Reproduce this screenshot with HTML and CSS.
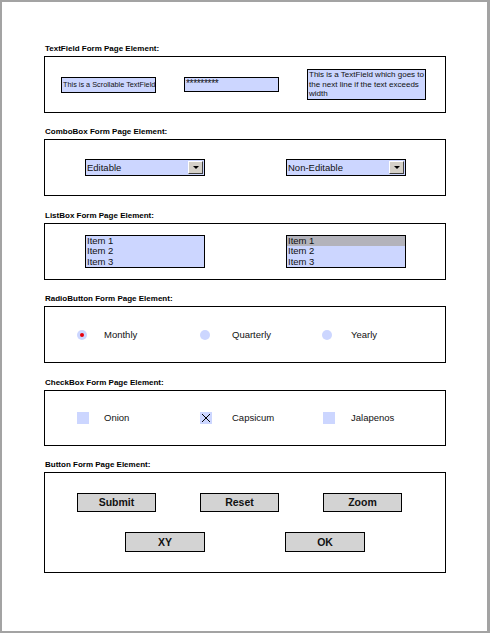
FILE: index.html
```html
<!DOCTYPE html>
<html>
<head>
<meta charset="utf-8">
<link rel="stylesheet" href="styles.css">
</head>
<body>
<div class="frame">
  <section class="section">
    <div class="title">TextField Form Page Element:</div>
    <div class="box box-text">
      <div class="field field-scroll">This is a Scrollable TextField</div>
      <div class="field field-pass">*********</div>
      <div class="field field-multi">This is a TextField which goes to the next line if the text exceeds width</div>
    </div>
  </section>

  <section class="section">
    <div class="title">ComboBox Form Page Element:</div>
    <div class="box box-pair">
      <div class="combo"><span class="combo-text">Editable</span><span class="combo-btn"><span class="tri"></span></span></div>
      <div class="combo"><span class="combo-text">Non-Editable</span><span class="combo-btn"><span class="tri"></span></span></div>
    </div>
  </section>

  <section class="section">
    <div class="title">ListBox Form Page Element:</div>
    <div class="box box-pair">
      <div class="list">
        <div class="item">Item 1</div>
        <div class="item">Item 2</div>
        <div class="item">Item 3</div>
      </div>
      <div class="list">
        <div class="item selected">Item 1</div>
        <div class="item">Item 2</div>
        <div class="item">Item 3</div>
      </div>
    </div>
  </section>

  <section class="section">
    <div class="title">RadioButton Form Page Element:</div>
    <div class="box box-opts">
      <span class="radio on"></span><span class="label">Monthly</span>
      <span class="radio"></span><span class="label">Quarterly</span>
      <span class="radio"></span><span class="label">Yearly</span>
    </div>
  </section>

  <section class="section">
    <div class="title">CheckBox Form Page Element:</div>
    <div class="box box-opts box-check">
      <span class="check"></span><span class="label">Onion</span>
      <span class="check"><svg viewBox="0 0 12 12" width="12" height="12"><path d="M2 2 L10 10 M10 2 L2 10" stroke="#000" stroke-width="1" fill="none"/></svg></span><span class="label">Capsicum</span>
      <span class="check"></span><span class="label">Jalapenos</span>
    </div>
  </section>

  <section class="section">
    <div class="title">Button Form Page Element:</div>
    <div class="box box-buttons">
      <div class="btn-row row1">
        <div class="btn">Submit</div>
        <div class="btn">Reset</div>
        <div class="btn">Zoom</div>
      </div>
      <div class="btn-row row2">
        <div class="btn">XY</div>
        <div class="btn">OK</div>
      </div>
    </div>
  </section>
</div>
</body>
</html>
```

FILE: styles.css
```css
* { box-sizing: border-box; }
html, body { margin: 0; padding: 0; background: #fff; }
body { font-family: "Liberation Sans", Arial, sans-serif; color: #111; }

.frame {
  width: 490px;
  height: 633px;
  border: 2px solid #a3a3a3;
  border-right-width: 3px;
  padding: 41px 0 0 42px;
  display: flex;
  flex-direction: column;
  gap: 13.4px;
}

.title {
  font-size: 8px;
  font-weight: bold;
  line-height: 11px;
  height: 11px;
  margin: 0 0 2px 1px;
  color: #000;
}

.box {
  width: 402px;
  height: 57px;
  border: 1px solid #000;
}

/* TextFields */
.box-text {
  display: grid;
  grid-template-columns: 123px 123px auto;
  align-items: center;
  padding-left: 16px;
}
.field {
  background: #ccd6ff;
  border: 1px solid #000;
  color: #111;
  overflow: hidden;
}
.field-scroll {
  width: 95px;
  height: 16px;
  font-size: 7.3px;
  line-height: 14px;
  padding-left: 1px;
  white-space: nowrap;
}
.field-pass {
  width: 95px;
  height: 15px;
  font-size: 10px;
  line-height: 11px;
  padding-left: 1px;
  letter-spacing: -0.3px;
}
.field-multi {
  width: 119px;
  height: 31px;
  font-size: 8px;
  line-height: 9.6px;
  padding-left: 1px;
}

/* Combo & list */
.box-pair {
  display: grid;
  grid-template-columns: 201px auto;
  align-items: center;
  padding-left: 40px;
}
.combo {
  width: 120px;
  height: 17px;
  border: 1px solid #000;
  background: #ccd6ff;
  display: flex;
  align-items: center;
  justify-content: space-between;
}
.combo-text {
  font-size: 9.5px;
  padding-left: 1px;
  line-height: 14px;
}
.combo-btn {
  width: 15px;
  height: 13px;
  margin-right: 1px;
  background: #d4d0c8;
  border-top: 1px solid #fff;
  border-left: 1px solid #fff;
  border-right: 1px solid #404040;
  border-bottom: 1px solid #404040;
  display: flex;
  align-items: center;
  justify-content: center;
}
.tri {
  width: 0;
  height: 0;
  border-left: 3px solid transparent;
  border-right: 3px solid transparent;
  border-top: 3px solid #000;
}
.list {
  width: 120px;
  height: 33px;
  border: 1px solid #000;
  background: #ccd6ff;
  overflow: hidden;
}
.item {
  font-size: 9.5px;
  line-height: 10.6px;
  height: 10.6px;
  padding-left: 1px;
}
.item.selected { background: #b3b3bb; }

/* Radio & check */
.box-opts {
  display: grid;
  grid-template-columns: 27px 96px 32px 90px 29px auto;
  align-items: center;
  padding-left: 32px;
}
.box-check {
  height: 56px;
  grid-template-columns: 27px 96px 32px 91px 28px auto;
}
.label {
  font-size: 9.5px;
  color: #111;
}
.radio {
  width: 10px;
  height: 10px;
  border-radius: 50%;
  background: #ccd6ff;
  display: flex;
  align-items: center;
  justify-content: center;
}
.radio.on::after {
  content: "";
  width: 4px;
  height: 4px;
  border-radius: 50%;
  background: #e8000b;
}
.check {
  width: 12px;
  height: 12px;
  background: #ccd6ff;
  display: block;
}
.check svg { display: block; }

/* Buttons */
.box-buttons {
  height: 101px;
  display: flex;
  flex-direction: column;
  padding-top: 20px;
  gap: 20px;
}
.btn-row { display: flex; }
.row1 { padding-left: 32px; gap: 44px; }
.row2 { padding-left: 80px; gap: 80px; }
.btn {
  width: 79px;
  height: 19px;
  border: 1px solid #000;
  background: #d3d3d3;
  font-size: 10.5px;
  font-weight: bold;
  text-align: center;
  line-height: 17px;
  color: #111;
}
.row2 .btn { width: 80px; height: 20px; line-height: 18px; }
```
